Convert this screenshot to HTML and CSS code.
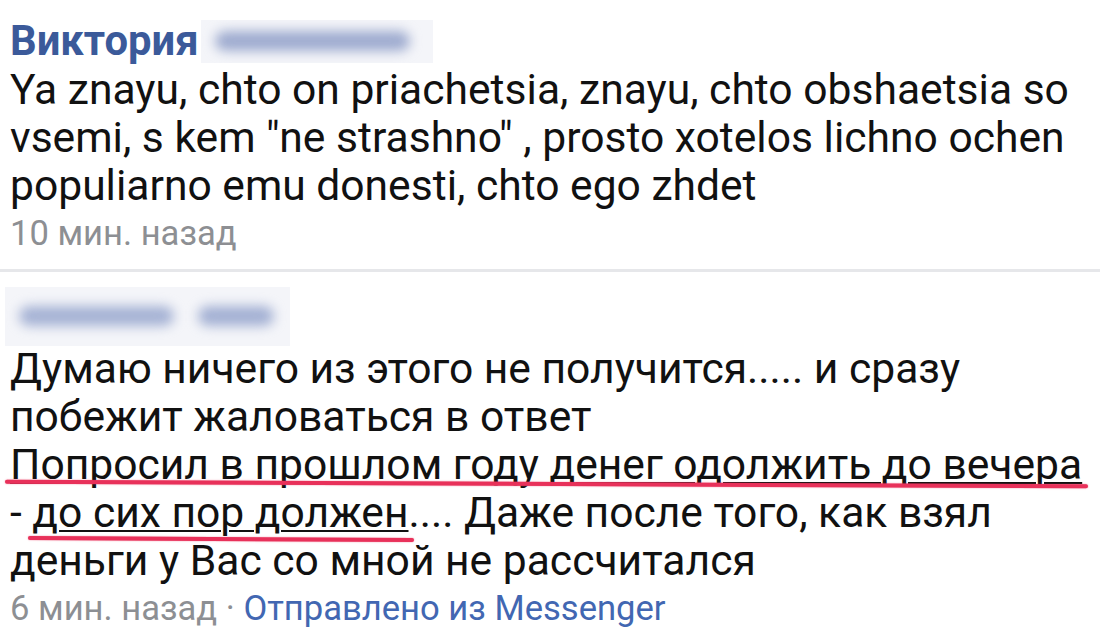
FILE: index.html
```html
<!DOCTYPE html>
<html lang="ru">
<head>
<meta charset="utf-8">
<link rel="stylesheet" href="styles.css">
</head>
<body>
<div class="feed">
  <div class="comment first">
    <div class="author"><span class="name">Виктория</span><span class="blur blur-a"><span class="blob b1"></span></span></div>
    <div class="text">Ya znayu, chto on priachetsia, znayu, chto obshaetsia so vsemi, s kem "ne strashno" , prosto xotelos lichno ochen populiarno emu donesti, chto ego zhdet</div>
    <div class="meta">10 мин. назад</div>
  </div>
  <div class="sep"></div>
  <div class="comment second">
    <div class="author"><span class="blur blur-b"><span class="blob b2"></span><span class="blob b3"></span></span></div>
    <div class="text">Думаю ничего из этого не получится..... и сразу<br>побежит жаловаться в ответ<br><span class="mark mark-long"><span class="ul">Попросил в прошлом году денег одолжить до вечера</span></span><br>- <span class="mark mark-short"><span class="ul">до сих пор должен</span></span>.... Даже после того, как взял<br>деньги у Вас со мной не рассчитался</div>
    <div class="meta">6 мин. назад · <span class="via">Отправлено из Messenger</span></div>
  </div>
</div>
</body>
</html>
```

FILE: styles.css
```css
html, body {
  margin: 0;
  padding: 0;
  background: #ffffff;
}
body {
  width: 1100px;
  height: 640px;
  overflow: hidden;
  font-family: Roboto, "Noto Sans", sans-serif;
  color: #141414;
}
.comment {
  padding: 0 10px;
}
.comment.first {
  padding-top: 17px;
  padding-bottom: 12px;
}
.comment.second {
  padding-top: 24px;
}
.author {
  height: 48px;
  display: flex;
  align-items: center;
}
.name {
  font-weight: 700;
  font-size: 41.8px;
  line-height: 48px;
  color: #3b5a9a;
}
.blur {
  display: inline-flex;
  align-items: center;
  background: #f4f5f9;
  overflow: hidden;
}
.blur-a {
  width: 232px;
  height: 43px;
  margin-left: 2px;
}
.blur-b {
  width: 285px;
  height: 59px;
  margin-left: -5px;
  margin-top: -8px;
}
.blob {
  display: block;
  height: 20px;
  border-radius: 10px;
  background: #9eabcf;
  filter: blur(6px);
}
.b1 {
  width: 195px;
  margin-left: 14px;
}
.b2 {
  width: 155px;
  margin-left: 14px;
  background: #a5b2d4;
}
.b3 {
  width: 76px;
  margin-left: 24px;
  background: #a3b0d3;
}
.text {
  font-size: 42.6px;
  line-height: 48px;
  color: #111111;
}
.meta {
  font-size: 34.6px;
  line-height: 48px;
  color: #8d8f93;
}
.via {
  color: #4267b2;
}
.sep {
  height: 3px;
  background: #e6e7ea;
}
.ul {
  text-decoration: underline;
  text-decoration-thickness: 2px;
  text-underline-offset: 3px;
}
.mark {
  position: relative;
}
.mark::after {
  content: "";
  position: absolute;
  height: 4px;
  border-radius: 2px;
  background: #e8315a;
  box-shadow: 0 0 1.5px rgba(232, 49, 90, 0.7);
}
.mark-long::after {
  left: -5px;
  right: -6px;
  bottom: 3px;
  transform: rotate(0.25deg);
}
.mark-short::after {
  left: -4px;
  right: -6px;
  bottom: -4px;
  transform: rotate(0.3deg);
}
```
